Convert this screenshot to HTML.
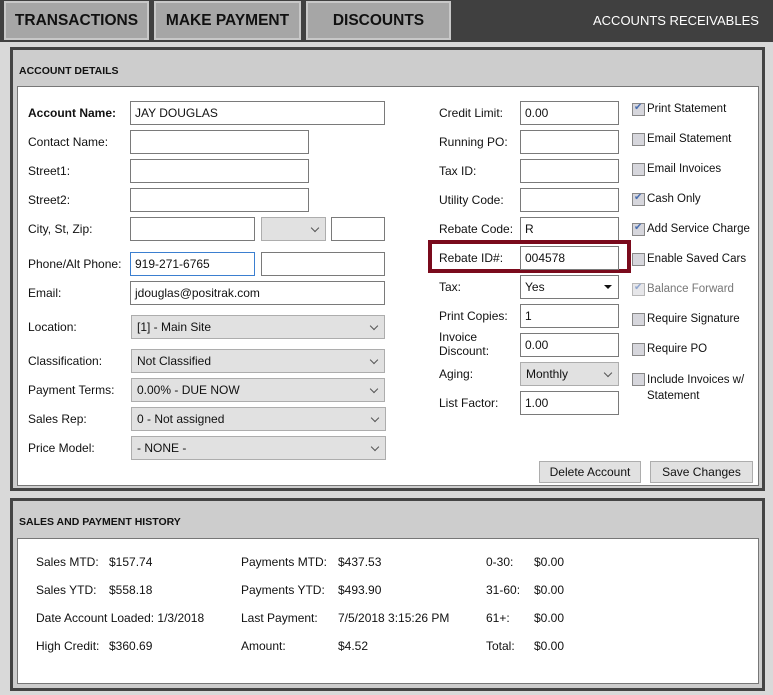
<!DOCTYPE html>
<html><head><meta charset="utf-8"><style>
*{box-sizing:border-box;margin:0;padding:0}
body{width:773px;height:695px;background:#d9d9d9;font-family:"Liberation Sans",sans-serif;font-size:12px;color:#111;position:relative;overflow:hidden}
.a{position:absolute}
.top{left:0;top:0;width:773px;height:42px;background:#404040}
.tab{top:1px;height:39px;border:2px solid #c8c8c8;background:#a6a6a6;font-weight:bold;font-size:15.5px;line-height:35px;text-align:center;color:#111}
.panel{left:10px;width:755px;border:3px solid #444;background:#cdcdcd}
.white{background:#fff;border:1px solid #777}
.h{font-weight:bold;font-size:10.5px}
.in{height:24px;border:1px solid #7a7a7a;background:#fff;padding-left:4px;line-height:22px;font-size:12px}
.sel{height:24px;border:1px solid #adadad;background:#e1e1e1;padding-left:5px;line-height:22px}
.sel::after{content:"";position:absolute;right:7px;top:7px;width:5px;height:5px;border-right:1px solid #555;border-bottom:1px solid #555;transform:rotate(45deg)}
.lb{line-height:14px}
.ck{font-size:11.5px}
.cb{width:13px;height:13px;border:1px solid #888;background:#d6d6dc}
.cb.c::after{content:"✔";position:absolute;left:1px;top:-2px;font-size:10px;color:#4a6fb0}
.btn{height:22px;border:1px solid #adadad;background:#e1e1e1;text-align:center;line-height:20px}
</style></head><body>
<div class="a top"></div>
<div class="a tab" style="left:4px;width:145px">TRANSACTIONS</div>
<div class="a tab" style="left:154px;width:147px">MAKE PAYMENT</div>
<div class="a tab" style="left:306px;width:145px">DISCOUNTS</div>
<div class="a" style="left:593px;top:13px;color:#fff;font-size:13px">ACCOUNTS RECEIVABLES</div>

<div class="a panel" style="top:47px;height:444px"></div>
<div class="a h" style="left:19px;top:65px">ACCOUNT DETAILS</div>
<div class="a white" style="left:17px;top:86px;width:742px;height:400px"></div>

<div class="a lb" style="left:28px;top:106px;font-weight:bold">Account Name:</div>
<div class="a in" style="left:130px;top:101px;width:255px">JAY DOUGLAS</div>
<div class="a lb" style="left:28px;top:135px">Contact Name:</div>
<div class="a in" style="left:130px;top:130px;width:179px"></div>
<div class="a lb" style="left:28px;top:164px">Street1:</div>
<div class="a in" style="left:130px;top:159px;width:179px"></div>
<div class="a lb" style="left:28px;top:193px">Street2:</div>
<div class="a in" style="left:130px;top:188px;width:179px"></div>
<div class="a lb" style="left:28px;top:222px">City, St, Zip:</div>
<div class="a in" style="left:130px;top:217px;width:125px"></div>
<div class="a sel" style="left:261px;top:217px;width:65px"></div>
<div class="a in" style="left:331px;top:217px;width:54px"></div>
<div class="a lb" style="left:28px;top:257px">Phone/Alt Phone:</div>
<div class="a in" style="left:130px;top:252px;width:125px;border-color:#3b7fd0">919-271-6765</div>
<div class="a in" style="left:261px;top:252px;width:124px"></div>
<div class="a lb" style="left:28px;top:286px">Email:</div>
<div class="a in" style="left:130px;top:281px;width:255px">jdouglas@positrak.com</div>
<div class="a lb" style="left:28px;top:320px">Location:</div>
<div class="a sel" style="left:131px;top:315px;width:254px">[1] - Main Site</div>
<div class="a lb" style="left:28px;top:354px">Classification:</div>
<div class="a sel" style="left:131px;top:349px;width:254px">Not Classified</div>
<div class="a lb" style="left:28px;top:383px">Payment Terms:</div>
<div class="a sel" style="left:131px;top:378px;width:254px">0.00% - DUE NOW</div>
<div class="a lb" style="left:28px;top:412px">Sales Rep:</div>
<div class="a sel" style="left:131px;top:407px;width:255px">0 - Not assigned</div>
<div class="a lb" style="left:28px;top:441px">Price Model:</div>
<div class="a sel" style="left:131px;top:436px;width:255px">- NONE -</div>

<div class="a lb" style="left:439px;top:106px">Credit Limit:</div>
<div class="a in" style="left:520px;top:101px;width:99px">0.00</div>
<div class="a lb" style="left:439px;top:135px">Running PO:</div>
<div class="a in" style="left:520px;top:130px;width:99px"></div>
<div class="a lb" style="left:439px;top:164px">Tax ID:</div>
<div class="a in" style="left:520px;top:159px;width:99px"></div>
<div class="a lb" style="left:439px;top:193px">Utility Code:</div>
<div class="a in" style="left:520px;top:188px;width:99px"></div>
<div class="a lb" style="left:439px;top:222px">Rebate Code:</div>
<div class="a in" style="left:520px;top:217px;width:99px">R</div>
<div class="a" style="left:428px;top:240px;width:203px;height:33px;border:4px solid #7a0a1c"></div>
<div class="a lb" style="left:439px;top:251px">Rebate ID#:</div>
<div class="a in" style="left:520px;top:246px;width:99px">004578</div>
<div class="a lb" style="left:439px;top:280px">Tax:</div>
<div class="a in" style="left:520px;top:275px;width:99px">Yes<span class="a" style="right:6px;top:9px;border-left:4px solid transparent;border-right:4px solid transparent;border-top:4px solid #111"></span></div>
<div class="a lb" style="left:439px;top:309px">Print Copies:</div>
<div class="a in" style="left:520px;top:304px;width:99px">1</div>
<div class="a lb" style="left:439px;top:330px">Invoice<br>Discount:</div>
<div class="a in" style="left:520px;top:333px;width:99px">0.00</div>
<div class="a lb" style="left:439px;top:367px">Aging:</div>
<div class="a sel" style="left:520px;top:362px;width:99px">Monthly</div>
<div class="a lb" style="left:439px;top:396px">List Factor:</div>
<div class="a in" style="left:520px;top:391px;width:99px">1.00</div>

<div class="a cb c" style="left:632px;top:103px"></div><div class="a lb ck" style="left:647px;top:102px">Print Statement</div>
<div class="a cb" style="left:632px;top:133px"></div><div class="a lb ck" style="left:647px;top:132px">Email Statement</div>
<div class="a cb" style="left:632px;top:163px"></div><div class="a lb ck" style="left:647px;top:162px">Email Invoices</div>
<div class="a cb c" style="left:632px;top:193px"></div><div class="a lb ck" style="left:647px;top:192px">Cash Only</div>
<div class="a cb c" style="left:632px;top:223px"></div><div class="a lb ck" style="left:647px;top:222px">Add Service Charge</div>
<div class="a cb" style="left:632px;top:253px"></div><div class="a lb ck" style="left:647px;top:252px">Enable Saved Cars</div>
<div class="a cb c" style="left:632px;top:283px;opacity:.6"></div><div class="a lb ck" style="left:647px;top:282px;color:#777">Balance Forward</div>
<div class="a cb" style="left:632px;top:313px"></div><div class="a lb ck" style="left:647px;top:312px">Require Signature</div>
<div class="a cb" style="left:632px;top:343px"></div><div class="a lb ck" style="left:647px;top:342px">Require PO</div>
<div class="a cb" style="left:632px;top:373px"></div><div class="a lb ck" style="left:647px;top:372px;line-height:16px">Include Invoices w/<br>Statement</div>

<div class="a btn" style="left:539px;top:461px;width:102px">Delete Account</div>
<div class="a btn" style="left:650px;top:461px;width:103px">Save Changes</div>

<div class="a panel" style="top:498px;height:193px"></div>
<div class="a h" style="left:19px;top:516px">SALES AND PAYMENT HISTORY</div>
<div class="a white" style="left:17px;top:538px;width:742px;height:146px"></div>

<div class="a lb" style="left:36px;top:555px">Sales MTD:</div><div class="a lb" style="left:109px;top:555px">$157.74</div>
<div class="a lb" style="left:36px;top:583px">Sales YTD:</div><div class="a lb" style="left:109px;top:583px">$558.18</div>
<div class="a lb" style="left:36px;top:611px">Date Account Loaded: 1/3/2018</div>
<div class="a lb" style="left:36px;top:639px">High Credit:</div><div class="a lb" style="left:109px;top:639px">$360.69</div>
<div class="a lb" style="left:241px;top:555px">Payments MTD:</div><div class="a lb" style="left:338px;top:555px">$437.53</div>
<div class="a lb" style="left:241px;top:583px">Payments YTD:</div><div class="a lb" style="left:338px;top:583px">$493.90</div>
<div class="a lb" style="left:241px;top:611px">Last Payment:</div><div class="a lb" style="left:338px;top:611px">7/5/2018 3:15:26 PM</div>
<div class="a lb" style="left:241px;top:639px">Amount:</div><div class="a lb" style="left:338px;top:639px">$4.52</div>
<div class="a lb" style="left:486px;top:555px">0-30:</div><div class="a lb" style="left:534px;top:555px">$0.00</div>
<div class="a lb" style="left:486px;top:583px">31-60:</div><div class="a lb" style="left:534px;top:583px">$0.00</div>
<div class="a lb" style="left:486px;top:611px">61+:</div><div class="a lb" style="left:534px;top:611px">$0.00</div>
<div class="a lb" style="left:486px;top:639px">Total:</div><div class="a lb" style="left:534px;top:639px">$0.00</div>
</body></html>
